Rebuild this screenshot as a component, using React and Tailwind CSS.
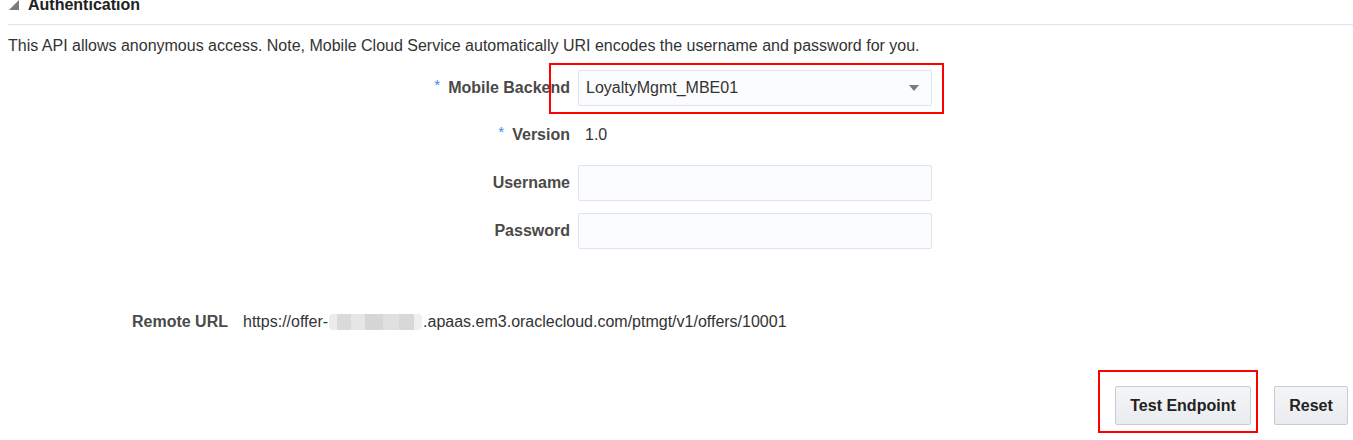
import React from "react";

function Row({ label, req, children, className = "" }) {
  return (
    <div className={"flex h-[36px] " + className}>
      <div className="flex w-[570px] items-center justify-end font-bold text-[#4a4a4a]">
        {req ? <span className="mb-[6px] mr-[8px] text-[15px] leading-[12px] font-normal text-[#3b8de0]">*</span> : null}
        <span>{label}</span>
      </div>
      <div className="ml-[8px] w-[354px]">{children}</div>
    </div>
  );
}

export default function App() {
  return (
    <div className="relative flex h-[440px] w-[1353px] flex-col overflow-hidden bg-white text-[16px] text-[#333333]" style={{ fontFamily: '"Liberation Sans", Arial, sans-serif' }}>
      {/* Section header */}
      <div className="ml-[8px] flex h-[25px] flex-col border-b border-[#dfe4ea]">
        <div className="-mt-[3px] flex items-start leading-[16px]">
          <svg width="10" height="10" viewBox="0 0 10 10" className="ml-[1px] mt-[3px]">
            <polygon points="10,0 10,10 0,10" fill="#777b80" />
          </svg>
          <span className="ml-[9px] font-bold text-[#222222]">Authentication</span>
        </div>
      </div>

      {/* Description */}
      <div className="ml-[8px] mt-[11px] leading-[20px] text-[#333333]">
        This API allows anonymous access. Note, Mobile Cloud Service automatically URI encodes the username and password for you.
      </div>

      {/* Form */}
      <div className="mt-[14px] flex flex-col">
        <Row label="Mobile Backend" req>
          <div className="flex h-[36px] items-center justify-between rounded-[2px] border border-[#dfe4ea] bg-[#fbfcfd] pl-[7px] pr-[12px]">
            <span className="text-[#333333]">LoyaltyMgmt_MBE01</span>
            <svg width="10" height="6" viewBox="0 0 10 6">
              <polygon points="0,0 10,0 5,6" fill="#7a7a7a" />
            </svg>
          </div>
        </Row>
        <Row label="Version" req className="mt-[11px]">
          <div className="flex h-[36px] items-center pl-[7px] text-[#333333]">1.0</div>
        </Row>
        <Row label="Username" className="mt-[12px]">
          <div className="h-[36px] rounded-[2px] border border-[#dfe4ea] bg-[#fbfcfd]" />
        </Row>
        <Row label="Password" className="mt-[12px]">
          <div className="h-[36px] rounded-[2px] border border-[#dfe4ea] bg-[#fbfcfd]" />
        </Row>
      </div>

      {/* Remote URL */}
      <div className="mt-[63px] flex h-[20px] items-center leading-[20px]">
        <div className="w-[228px] text-right font-bold text-[#4a4a4a]">Remote URL</div>
        <div className="ml-[15px] flex items-center text-[#333333]">
          <span>https://offer-</span>
          <span className="mx-[1px] flex h-[16px] w-[93px] overflow-hidden rounded-[4px]">
            <span className="w-[8px] bg-[#ececec]" />
            <span className="w-[14px] bg-[#dadada]" />
            <span className="w-[14px] bg-[#e6e6e6]" />
            <span className="w-[18px] bg-[#d6d6d6]" />
            <span className="w-[16px] bg-[#e0e0e0]" />
            <span className="w-[15px] bg-[#d8d8d8]" />
            <span className="w-[8px] bg-[#efefef]" />
          </span>
          <span>.apaas.em3.oraclecloud.com/ptmgt/v1/offers/10001</span>
        </div>
      </div>

      {/* Buttons */}
      <div className="mt-[54px] flex justify-end gap-[23px] pr-[5px]">
        <button className="h-[39px] w-[136px] rounded-[2px] border border-[#c4ced7] bg-gradient-to-b from-[#f4f5f7] to-[#e9ecef] font-bold text-[#222222]">
          Test Endpoint
        </button>
        <button className="h-[39px] w-[74px] rounded-[2px] border border-[#c4ced7] bg-gradient-to-b from-[#f4f5f7] to-[#e9ecef] font-bold text-[#222222]">
          Reset
        </button>
      </div>

      {/* Annotation boxes */}
      <div className="pointer-events-none absolute left-[549px] top-[63px] h-[51px] w-[395px] border-2 border-[#ff0000]" />
      <div className="pointer-events-none absolute left-[1098px] top-[370px] h-[63px] w-[160px] border-2 border-[#ff0000]" />
    </div>
  );
}
